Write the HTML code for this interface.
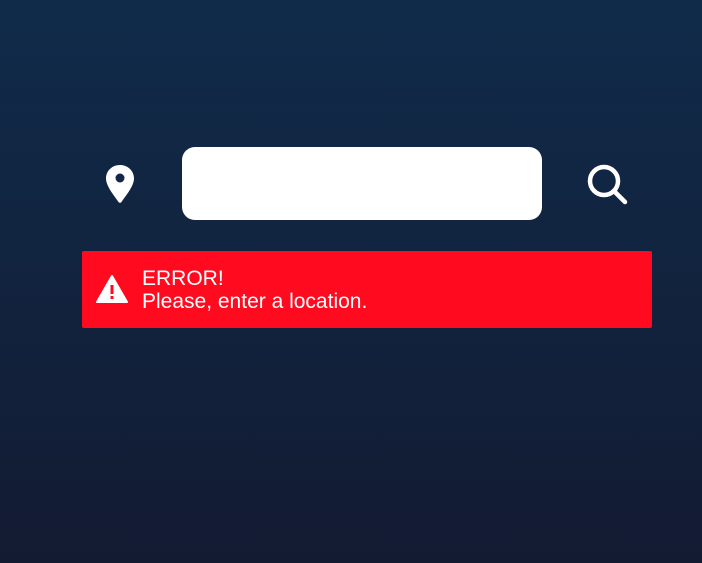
<!DOCTYPE html>
<html><head><style>
html,body{margin:0;padding:0}
body{width:702px;height:563px;overflow:hidden;background:linear-gradient(#102b4a,#131b32);font-family:"Liberation Sans",sans-serif;position:relative}
.box{position:absolute;left:182px;top:147px;width:360px;height:73px;background:#fff;border-radius:13px}
.err{position:absolute;left:82px;top:251px;width:570px;height:77px;background:#ff0a1f;border-radius:2px;color:#fff}
.t{position:absolute;left:60px;top:16px;font-size:21px;line-height:23px}
svg{position:absolute}
</style></head><body>
<svg style="left:104px;top:164px" width="32" height="40" viewBox="0 0 32 40">
<path d="M16 1C8 1 2 7 2 14.5c0 8 9 18 12.5 23.5a1.8 1.8 0 0 0 3 0C21 32.5 30 22.5 30 14.5 30 7 24 1 16 1z" fill="#fff"/>
<circle cx="16" cy="14" r="4.5" fill="#13264a"/>
</svg>
<div class="box"></div>
<svg style="left:586px;top:162px" width="44" height="44" viewBox="0 0 44 44">
<circle cx="18" cy="19" r="14" fill="none" stroke="#fff" stroke-width="4.5"/>
<path d="M29 30l10 10" stroke="#fff" stroke-width="4.5" stroke-linecap="round"/>
</svg>
<div class="err">
<svg style="left:14px;top:24px" width="32" height="28" viewBox="0 0 32 28">
<path d="M16 1L1 27h30z" fill="#fff" stroke="#fff" stroke-width="2" stroke-linejoin="round"/>
<rect x="14.5" y="10" width="3" height="9" fill="#ff0a1f"/>
<rect x="14.5" y="21" width="3" height="3" fill="#ff0a1f"/>
</svg>
<div class="t">ERROR!<br>Please, enter a location.</div>
</div>
</body></html>
